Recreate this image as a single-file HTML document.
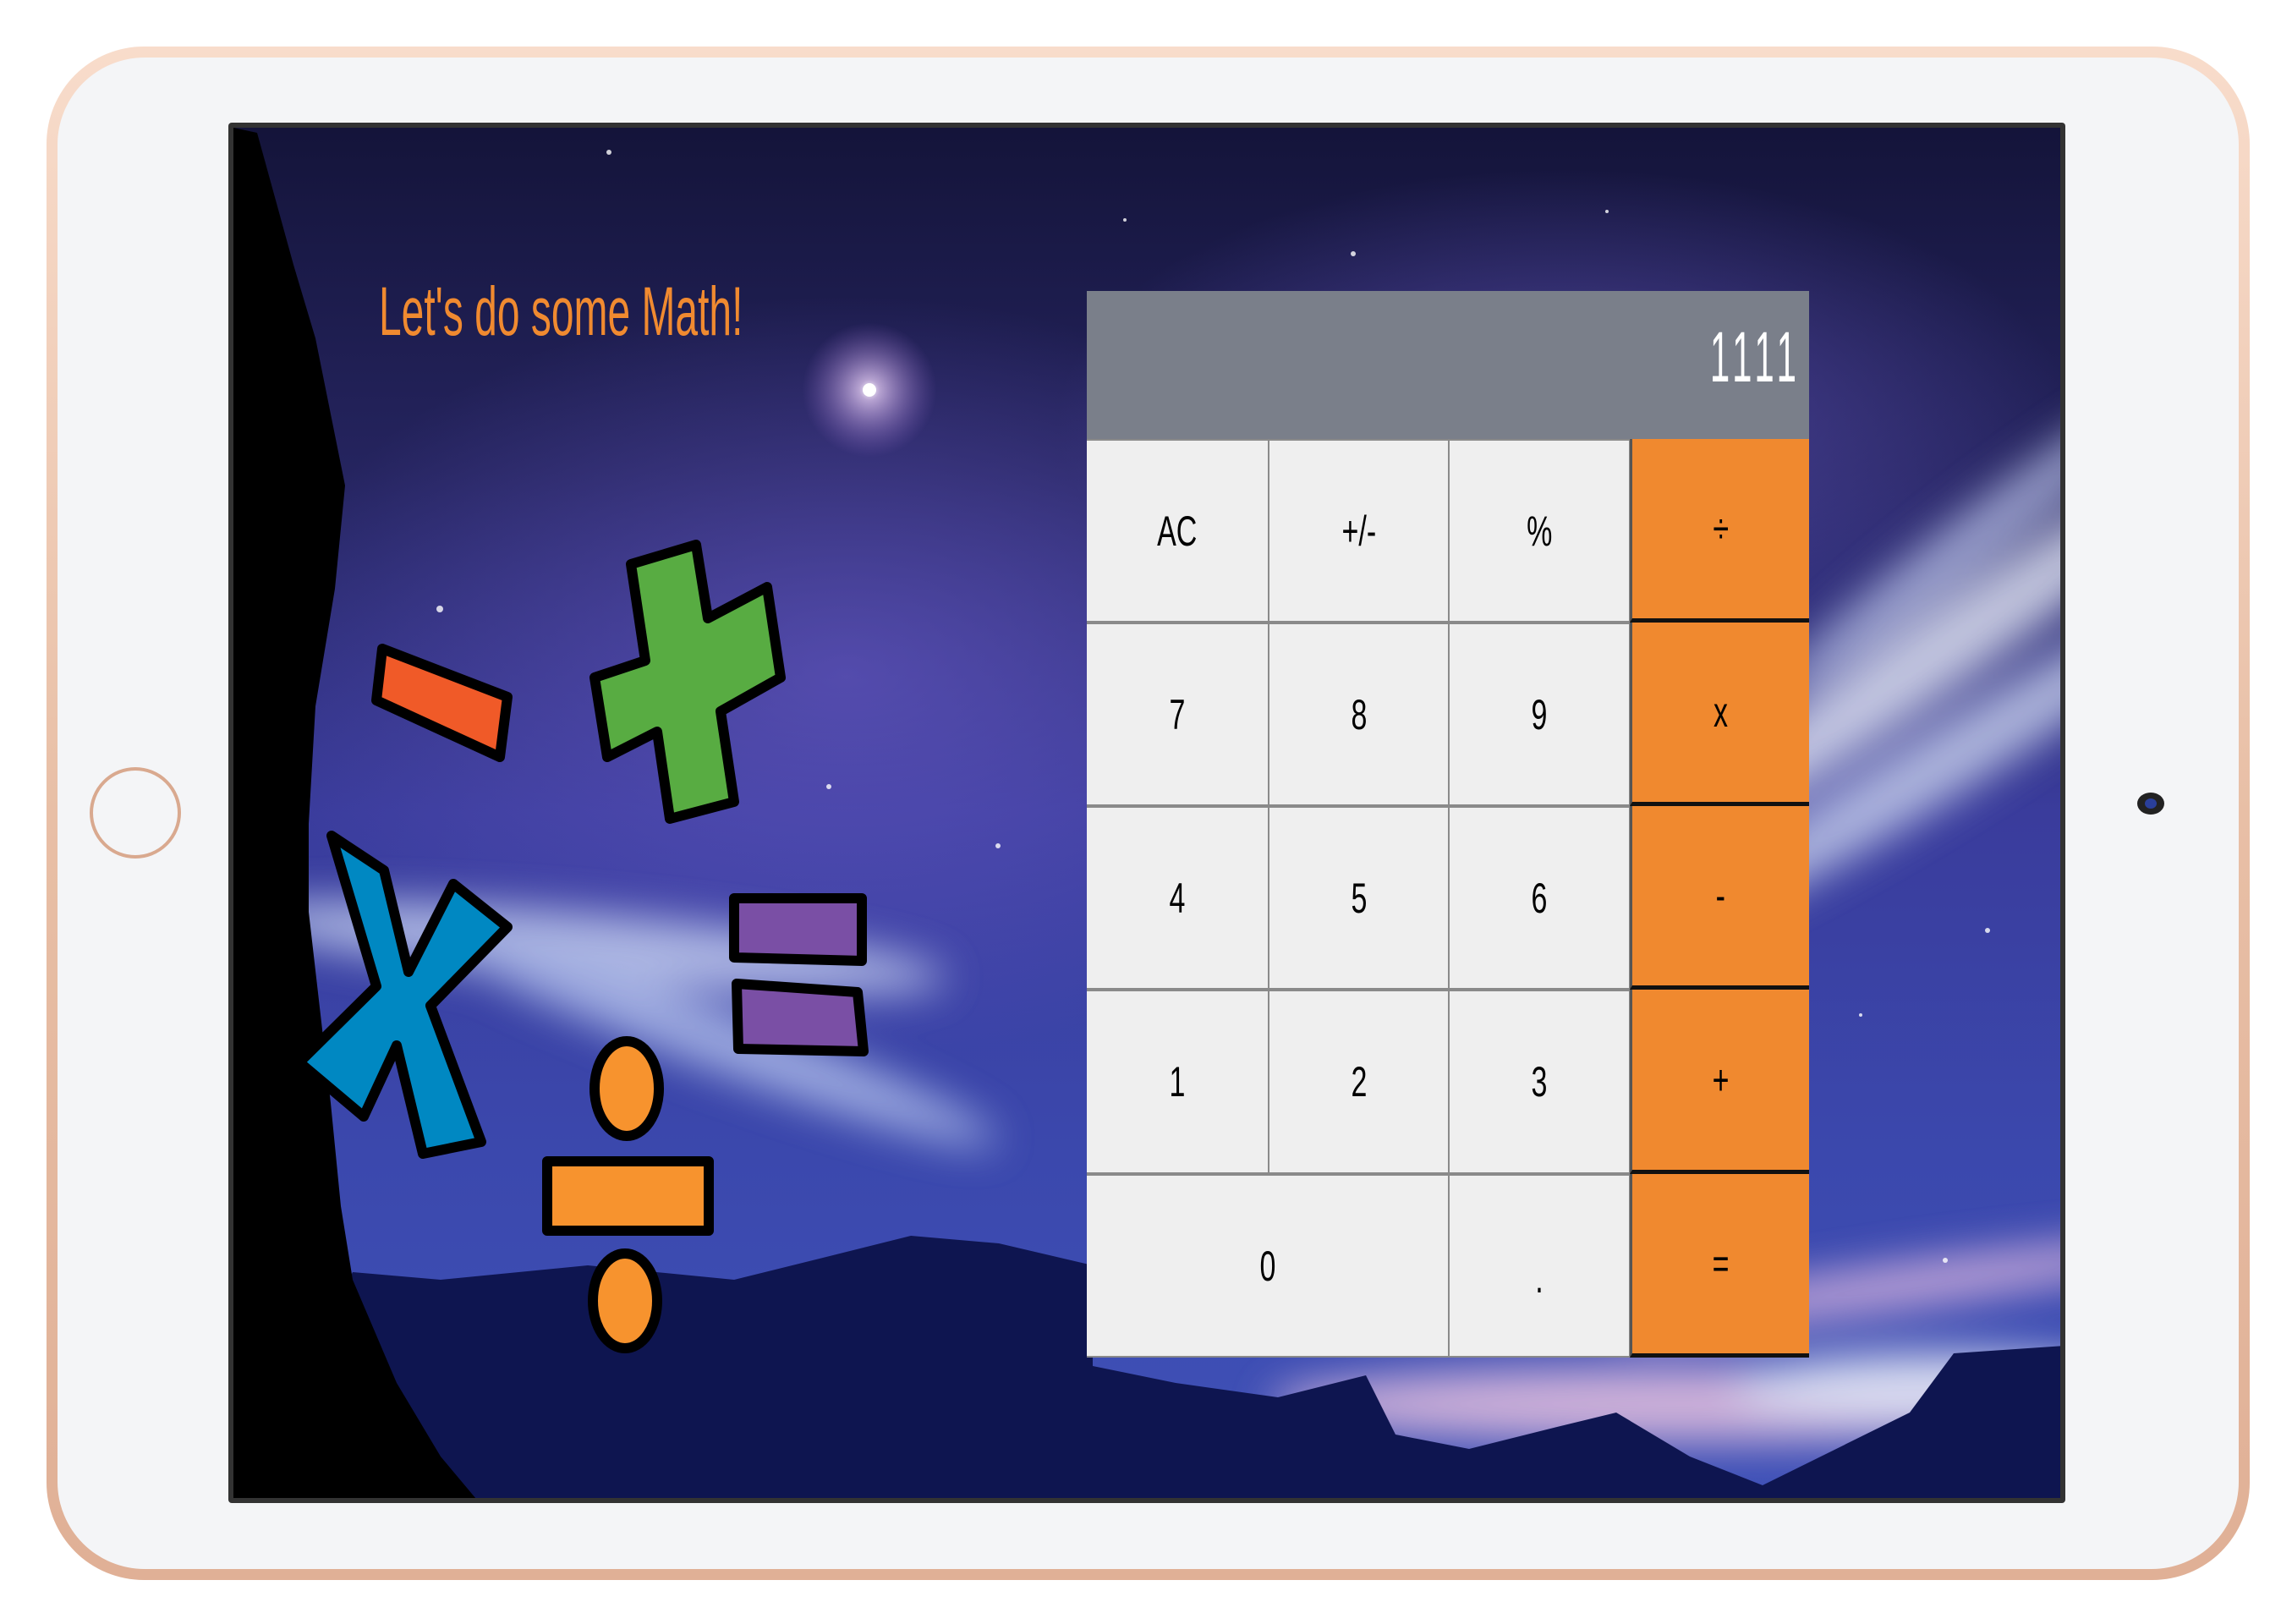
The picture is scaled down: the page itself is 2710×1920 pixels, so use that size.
<!DOCTYPE html>
<html><head><meta charset="utf-8">
<style>
html,body{margin:0;padding:0;background:#fff;}
body{width:2710px;height:1920px;position:relative;overflow:hidden;font-family:"Liberation Sans",sans-serif;}
.abs{position:absolute;}
.cell{position:absolute;background:#efefef;display:flex;align-items:center;justify-content:center;}
.cell span{display:inline-block;font-size:50px;color:#000;transform:scaleX(0.68);}
.op{background:#f0892f;border-left:3px solid #555;border-bottom:5px solid #111;box-sizing:border-box;}
</style></head><body>
<svg class="abs" style="left:0;top:0" width="2710" height="1920" viewBox="0 0 2710 1920">
<defs>
<linearGradient id="gold" x1="0" y1="0" x2="0" y2="1">
<stop offset="0" stop-color="#f8dccb"/><stop offset="0.5" stop-color="#e8bfa6"/><stop offset="1" stop-color="#e0b096"/></linearGradient>
<linearGradient id="sky" x1="0" y1="0" x2="0" y2="1">
<stop offset="0" stop-color="#14143a"/><stop offset="0.25" stop-color="#25245f"/><stop offset="0.5" stop-color="#3a3c9c"/><stop offset="0.75" stop-color="#3b48ad"/><stop offset="1" stop-color="#3f52b8"/></linearGradient>
<radialGradient id="glow" cx="0.5" cy="0.5" r="0.5"><stop offset="0" stop-color="#fff" stop-opacity="1"/><stop offset="0.15" stop-color="#f3d8ff" stop-opacity="0.7"/><stop offset="1" stop-color="#9a6bd0" stop-opacity="0"/></radialGradient>
<radialGradient id="purp" cx="0.5" cy="0.5" r="0.5"><stop offset="0" stop-color="#6a5cc8" stop-opacity="0.6"/><stop offset="1" stop-color="#6a5cc8" stop-opacity="0"/></radialGradient>
<filter id="bl" x="-50%" y="-50%" width="200%" height="200%"><feGaussianBlur stdDeviation="25"/></filter>
<clipPath id="scr"><rect x="276" y="151" width="2160" height="1620"/></clipPath>
</defs>
<rect x="55" y="55" width="2605" height="1813" rx="115" fill="url(#gold)"/>
<rect x="68" y="68" width="2579" height="1787" rx="103" fill="#f4f5f7"/>
<circle cx="160" cy="961" r="52" fill="none" stroke="#d9a98f" stroke-width="4"/>
<ellipse cx="2543" cy="950" rx="16" ry="13" fill="#222"/><ellipse cx="2543" cy="950" rx="7" ry="6" fill="#2a3f9a"/>
<rect x="270" y="145" width="2172" height="1632" fill="#333" rx="4"/>
<g clip-path="url(#scr)">
<rect x="276" y="151" width="2160" height="1620" fill="url(#sky)"/>
<ellipse cx="1000" cy="800" rx="700" ry="450" fill="url(#purp)"/>
<ellipse cx="1850" cy="500" rx="600" ry="300" fill="url(#purp)"/>
<g filter="url(#bl)" opacity="0.8">
<ellipse cx="2280" cy="780" rx="420" ry="45" transform="rotate(-35 2280 780)" fill="#e8ecf8"/>
<ellipse cx="2300" cy="900" rx="380" ry="40" transform="rotate(-32 2300 900)" fill="#cdd6f0"/>
<ellipse cx="2330" cy="640" rx="300" ry="30" transform="rotate(-38 2330 640)" fill="#b8c0e6"/>
<ellipse cx="700" cy="1120" rx="420" ry="40" transform="rotate(5 700 1120)" fill="#c9d4f2"/>
<ellipse cx="850" cy="1230" rx="350" ry="35" transform="rotate(20 850 1230)" fill="#b6c4ee"/>
<ellipse cx="2250" cy="1520" rx="350" ry="25" transform="rotate(-8 2250 1520)" fill="#e9c0e4"/>
<ellipse cx="2000" cy="1660" rx="500" ry="45" fill="#f2c9e2"/>
<ellipse cx="2300" cy="1640" rx="250" ry="40" fill="#ffffff"/>
</g>
<circle cx="1028" cy="461" r="80" fill="url(#glow)"/>
<circle cx="1028" cy="461" r="8" fill="#fff"/>
<g fill="#fff" opacity="0.8">
<circle cx="520" cy="720" r="4"/><circle cx="2300" cy="1490" r="3"/><circle cx="1600" cy="300" r="3"/><circle cx="1900" cy="250" r="2"/><circle cx="1180" cy="1000" r="3"/><circle cx="980" cy="930" r="3"/><circle cx="2350" cy="1100" r="3"/><circle cx="2200" cy="1200" r="2"/><circle cx="720" cy="180" r="3"/><circle cx="1330" cy="260" r="2"/>
</g>
<polygon fill="#0e1550" points="417,1504 521,1513 695,1496 868,1513 973,1487 1077,1461 1181,1470 1292,1496 1292,1615 1390,1635 1511,1652 1615,1626 1650,1696 1737,1713 1841,1687 1911,1670 1998,1722 2084,1756 2258,1670 2310,1600 2441,1591 2441,1780 276,1780"/>
<polygon fill="#000" points="276,151 304,157 347,313 373,400 408,574 396,696 373,835 365,974 365,1078 391,1304 403,1426 417,1513 469,1635 521,1722 573,1784 276,1784"/>
</g>
<g stroke="#000" stroke-width="12" stroke-linejoin="round">
<polygon fill="#f05a28" points="452,767 600,824 591,895 445,828"/>
<polygon fill="#58ac42" points="746,667 823,644 837,731 907,694 923,801 852,841 868,948 792,968 777,865 718,895 703,801 763,781"/>
<polygon fill="#0088c2" points="392,988 454,1029 483,1149 536,1045 600,1096 509,1189 569,1350 500,1364 469,1236 430,1320 354,1256 445,1166"/>
<polygon fill="#7a4fa5" points="868,1062 1019,1062 1019,1136 868,1132"/>
<polygon fill="#7a4fa5" points="871,1163 1014,1173 1021,1243 873,1240"/>
<ellipse fill="#f7932e" cx="741" cy="1287" rx="38" ry="56"/>
<polygon fill="#f7932e" points="647,1373 838,1373 838,1455 647,1455"/>
<ellipse fill="#f7932e" cx="739" cy="1538" rx="38" ry="56"/>
</g>
</svg>
<div class="abs" style="left:448px;top:322px;font-size:82px;color:#f08a30;white-space:nowrap;transform:scaleX(0.585);transform-origin:0 0;">Let's do some Math!</div>
<div class="abs" style="left:1285px;top:344px;width:854px;height:1261px;background:#8a8a8a;"></div>
<div class="abs" style="left:1285px;top:344px;width:854px;height:175px;background:#7a7f8a;"></div>
<div class="abs" style="left:1700px;top:374px;width:430px;text-align:right;font-size:84px;color:#fff;letter-spacing:12px;transform:scaleX(0.5);transform-origin:100% 0;">1111</div>

<div class="cell" style="left:1285px;top:521px;width:214px;height:213px"><span>AC</span></div>
<div class="cell" style="left:1501px;top:521px;width:211px;height:213px"><span>+/-</span></div>
<div class="cell" style="left:1714px;top:521px;width:212px;height:213px"><span>%</span></div>
<div class="cell op" style="left:1927px;top:519px;width:212px;height:217px"><span>÷</span></div>

<div class="cell" style="left:1285px;top:738px;width:214px;height:213px"><span>7</span></div>
<div class="cell" style="left:1501px;top:738px;width:211px;height:213px"><span>8</span></div>
<div class="cell" style="left:1714px;top:738px;width:212px;height:213px"><span>9</span></div>
<div class="cell op" style="left:1927px;top:736px;width:212px;height:217px"><span>x</span></div>

<div class="cell" style="left:1285px;top:955px;width:214px;height:213px"><span>4</span></div>
<div class="cell" style="left:1501px;top:955px;width:211px;height:213px"><span>5</span></div>
<div class="cell" style="left:1714px;top:955px;width:212px;height:213px"><span>6</span></div>
<div class="cell op" style="left:1927px;top:953px;width:212px;height:217px"><span>-</span></div>

<div class="cell" style="left:1285px;top:1172px;width:214px;height:214px"><span>1</span></div>
<div class="cell" style="left:1501px;top:1172px;width:211px;height:214px"><span>2</span></div>
<div class="cell" style="left:1714px;top:1172px;width:212px;height:214px"><span>3</span></div>
<div class="cell op" style="left:1927px;top:1170px;width:212px;height:218px"><span>+</span></div>

<div class="cell" style="left:1285px;top:1390px;width:427px;height:213px"><span>0</span></div>
<div class="cell" style="left:1714px;top:1390px;width:212px;height:213px"><span style="position:relative;top:14px">.</span></div>
<div class="cell op" style="left:1927px;top:1388px;width:212px;height:217px"><span>=</span></div>
</body></html>
